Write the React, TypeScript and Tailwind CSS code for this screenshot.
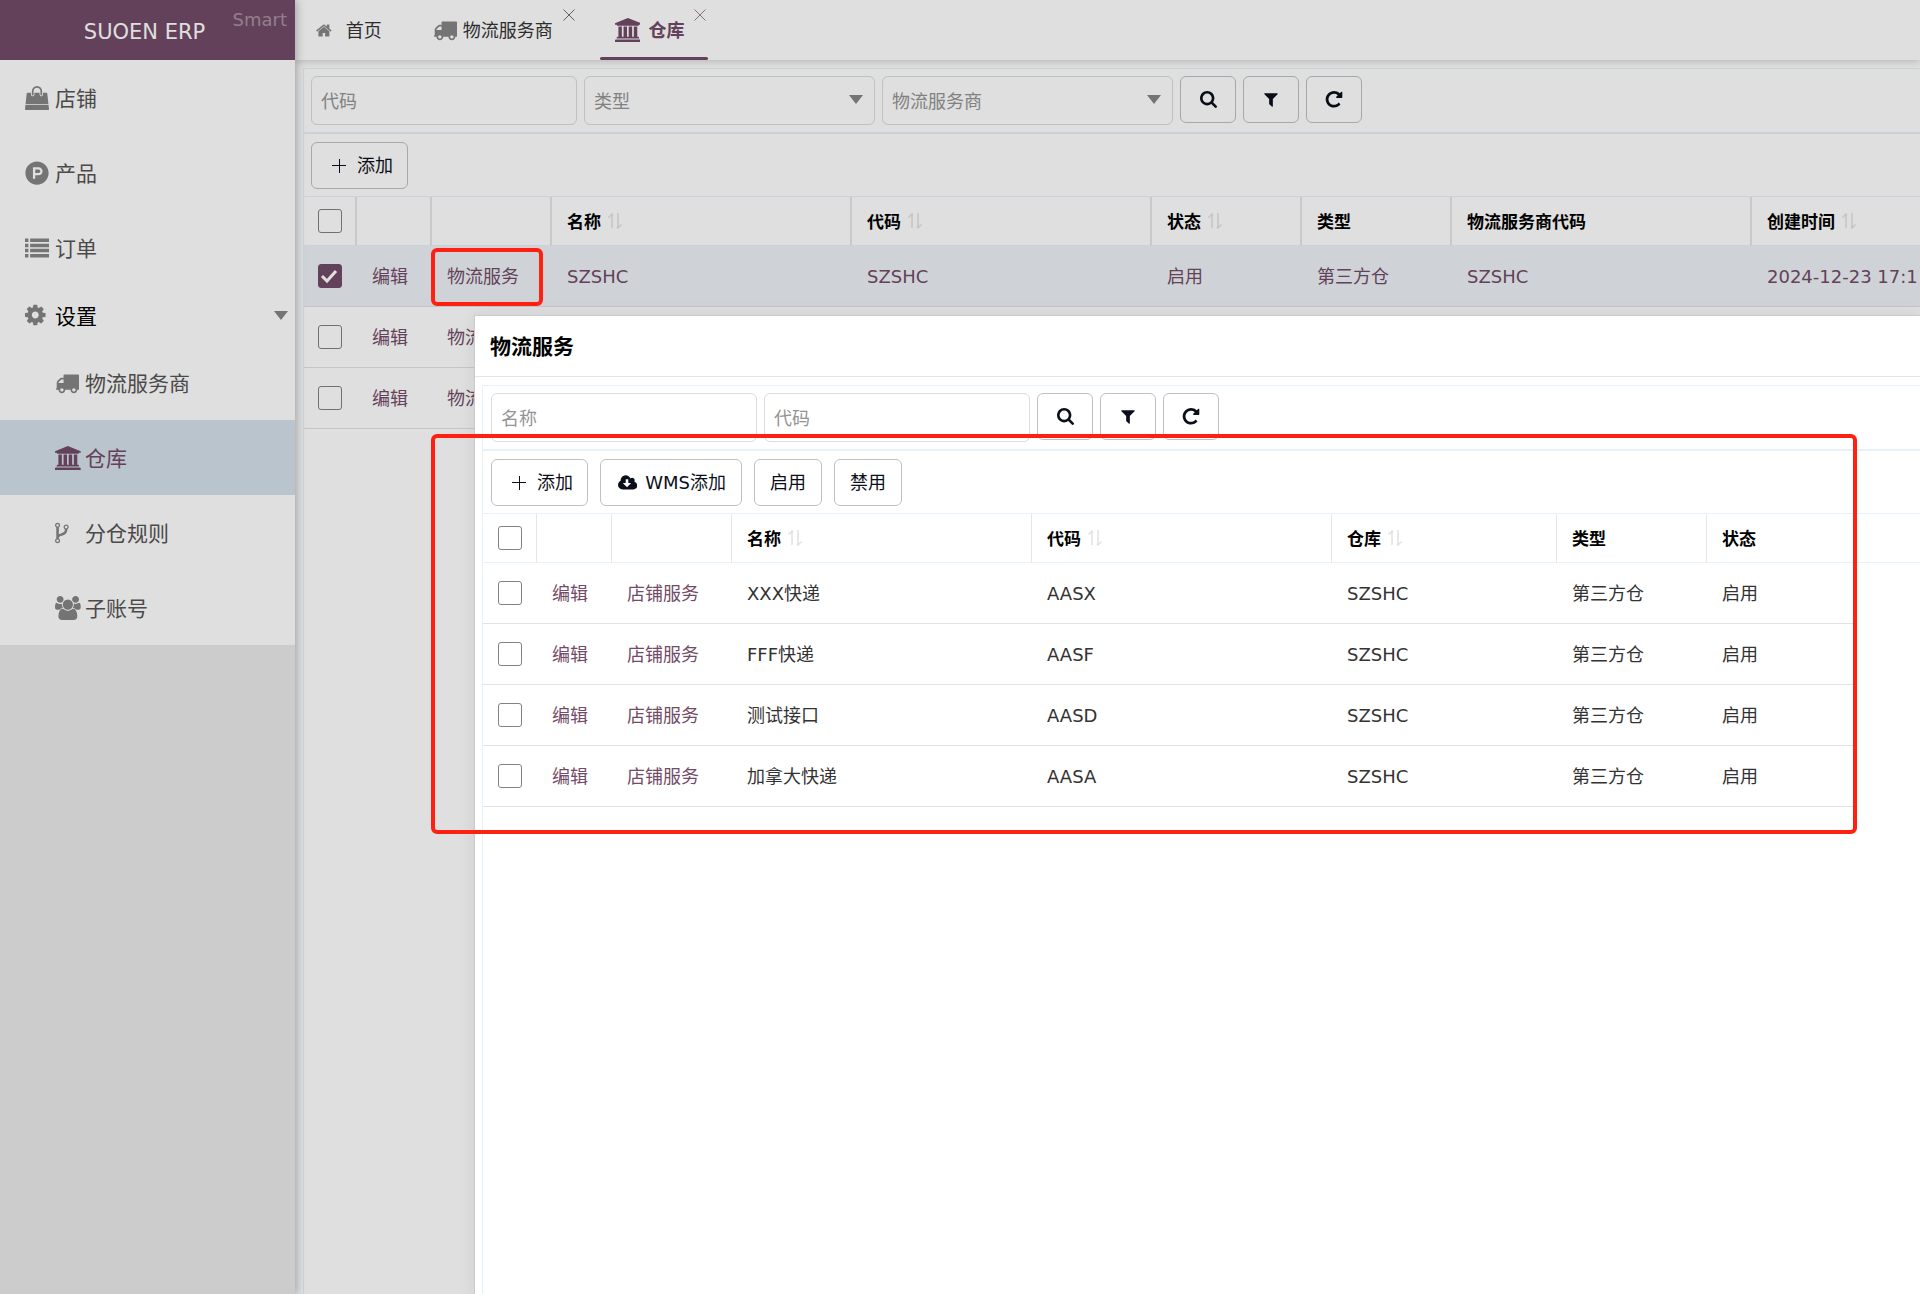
import React from "react";
import { FaProductHunt } from "react-icons/fa";

type IconProps = { name: keyof typeof icons; size?: string };

const icons = {
  bag: {
    box: "0 0 1792 1792",
    d: "M1757 1408l35 313q3 28-16 50-19 21-48 21h-1664q-29 0-48-21-19-22-16-50l35-313h1722zm-93-839l86 775h-1708l86-775q3-24 21-40.500t43-16.500h256v128q0 53 37.500 90.500t90.500 37.500 90.500-37.500 37.500-90.500v-128h384v128q0 53 37.500 90.500t90.500 37.500 90.500-37.500 37.500-90.500v-128h256q25 0 43 16.500t21 40.500zm-384-185v256q0 26-19 45t-45 19-45-19-19-45v-256q0-106-75-181t-181-75-181 75-75 181v256q0 26-19 45t-45 19-45-19-19-45v-256q0-159 112.500-271.500t271.500-112.500 271.500 112.500 112.500 271.500z",
  },
  list: {
    box: "0 0 1792 1792",
    d: "M0 192h256v256H0zM384 192h1408v256H384zM0 576h256v256H0zM384 576h1408v256H384zM0 960h256v256H0zM384 960h1408v256H384zM0 1344h256v256H0zM384 1344h1408v256H384z",
  },
  cog: {
    box: "128 0 1536 1792",
    d: "M1152 896q0-106-75-181t-181-75-181 75-75 181 75 181 181 75 181-75 75-181zm512-109v222q0 12-8 23t-20 13l-185 28q-19 54-39 91 35 50 107 138 10 12 10 25t-9 23q-27 37-99 108t-94 71q-12 0-26-9l-138-108q-44 23-91 38-16 136-29 186-7 28-36 28h-222q-14 0-24.500-8.500t-11.500-21.500l-28-184q-49-16-90-37l-141 107q-10 9-25 9-14 0-25-11-126-114-165-168-7-10-7-23 0-12 8-23 15-21 51-66.500t54-70.500q-27-50-41-99l-183-27q-13-2-21-12.500t-8-23.500v-222q0-12 8-23t19-13l186-28q14-46 39-92-40-57-107-138-10-12-10-24 0-10 9-23 26-36 98.500-107.500t94.500-71.500q13 0 26 10l138 107q44-23 91-38 16-136 29-186 7-28 36-28h222q14 0 24.500 8.500t11.500 21.500l28 184q49 16 90 37l142-107q9-9 24-9 13 0 25 10 129 119 165 170 7 8 7 22 0 12-8 23-15 21-51 66.500t-54 70.500q26 50 41 98l183 28q13 2 21 12.500t8 23.500z",
  },
  truck: {
    box: "0 0 1792 1792",
    d: "M640 1408q0-52-38-90t-90-38-90 38-38 90 38 90 90 38 90-38 38-90zm-384-512h384v-256h-158q-13 0-22 9l-195 195q-9 9-9 22v30zm1280 512q0-52-38-90t-90-38-90 38-38 90 38 90 90 38 90-38 38-90zm256-1088v1024q0 15-4 26.500t-13.500 18.500-16.500 11.500-23.500 6-22.500 2-25.500 0-22.500-.5q0 106-75 181t-181 75-181-75-75-181h-384q0 106-75 181t-181 75-181-75-75-181h-64q-3 0-22.500.5t-25.500 0-22.500-2-23.500-6-16.500-11.500-13.500-18.500-4-26.500q0-26 19-45t45-19v-320q0-8-.5-35t0-38 2.500-34.500 6.500-37 14-30.500 22.500-30l198-198q19-19 50.500-32t58.500-13h160v-192q0-26 19-45t45-19h1024q26 0 45 19t19 45z",
  },
  bank: {
    box: "0 0 1920 1792",
    d: "M960 0l960 384v128h-128q0 26-20.500 45t-48.500 19h-1526q-28 0-48.500-19t-20.500-45h-128v-128zm-704 640h256v768h128v-768h256v768h128v-768h256v768h128v-768h256v768h59q28 0 48.500 19t20.500 45v64h-1664v-64q0-26 20.500-45t48.500-19h59v-768zm1595 960q28 0 48.500 19t20.500 45v128h-1920v-128q0-26 20.500-45t48.500-19h1782z",
  },
  fork: {
    box: "384 0 1024 1792",
    d: "M672 1472q0-40-28-68t-68-28-68 28-28 68 28 68 68 28 68-28 28-68zm0-1152q0-40-28-68t-68-28-68 28-28 68 28 68 68 28 68-28 28-68zm640 128q0-40-28-68t-68-28-68 28-28 68 28 68 68 28 68-28 28-68zm96 0q0 52-26 96.500t-70 69.500q-2 287-226 414-67 38-203 81-128 40-169.500 71t-41.500 100v26q44 25 70 69.500t26 96.500q0 80-56 136t-136 56-136-56-56-136q0-52 26-96.500t70-69.500v-820q-44-25-70-69.500t-26-96.500q0-80 56-136t136-56 136 56 56 136q0 52-26 96.500t-70 69.500v497q54-26 154-57 55-17 87.500-29.500t70.500-31 59-39.500 40.500-51 28-69.500 8.500-91.500q-44-25-70-69.500t-26-96.500q0-80 56-136t136-56 136 56 56 136z",
  },
  users: {
    box: "-64 0 1920 1792",
    d: "M529 896q-162 5-265 128h-134q-82 0-138-40.500t-56-118.500q0-353 124-353 6 0 43.500 21t97.500 42.500 119 21.500q67 0 133-23-5 37-5 66 0 143 83 263zm1071 637q0 120-73 189.500t-194 69.500h-874q-121 0-194-69.500t-73-189.500q0-53 3.500-103.500t14-109 26.500-108.500 43-97.500 62-81 85.500-53.500 111.500-20q10 0 43 21.500t73 48 107 48 135 21.500 135-21.500 107-48 73-48 43-21.500q61 0 111.500 20t85.500 53.500 62 81 43 97.500 26.500 108.500 14 109 3.500 103.500zm-1024-1277q0 106-75 181t-181 75-181-75-75-181 75-181 181-75 181 75 75 181zm704 384q0 159-112.500 271.500t-271.500 112.500-271.500-112.500-112.500-271.500 112.500-271.500 271.500-112.500 271.500 112.500 112.500 271.500zm576 225q0 78-56 118.500t-138 40.500h-134q-103-123-265-128 83-120 83-263 0-29-5-66 66 23 133 23 59 0 119-21.500t97.500-42.500 43.500-21q124 0 124 353zm-128-609q0 106-75 181t-181 75-181-75-75-181 75-181 181-75 181 75 75 181z",
  },
  home: {
    box: "64 0 1664 1792",
    d: "M1472 992v480q0 26-19 45t-45 19h-384v-384h-256v384h-384q-26 0-45-19t-19-45v-480q0-1 .5-3t.5-3l575-474 575 474q1 2 1 6zm223-69l-62 74q-8 9-21 11h-3q-13 0-21-7l-692-577-692 577q-12 8-24 7-13-2-21-11l-62-74q-8-10-7-23.500t11-21.500l719-599q32-26 76-26t76 26l244 204v-195q0-14 9-23t23-9h192q14 0 23 9t9 23v408l219 182q10 8 11 21.500t-7 23.500z",
  },
  search: {
    box: "64 128 1664 1664",
    d: "M1216 832q0-185-131.500-316.500t-316.500-131.500-316.500 131.500-131.500 316.500 131.500 316.500 316.500 131.500 316.500-131.500 131.500-316.500zm512 832q0 52-38 90t-90 38q-54 0-90-38l-343-342q-179 124-399 124-143 0-273.500-55.500t-225-150-150-225-55.500-273.500 55.500-273.500 150-225 225-150 273.500-55.500 273.500 55.500 225 150 150 225 55.500 273.500q0 220-124 399l343 343q37 37 37 90z",
  },
  filter: {
    box: "64 128 1664 1664",
    d: "M1595 295q17 41-14 70l-493 493v742q0 42-39 59-13 5-25 5-27 0-45-19l-256-256q-19-19-19-45v-486l-493-493q-31-29-14-70 17-39 59-39h1280q42 0 59 39z",
  },
  repeat: {
    box: "64 128 1664 1664",
    d: "M1664 256v448q0 26-19 45t-45 19h-448q-42 0-59-40-17-39 14-69l138-138q-148-137-349-137-104 0-198.500 40.500t-163.500 109.500-109.500 163.500-40.500 198.500 40.500 198.500 109.500 163.500 163.500 109.500 198.500 40.500q119 0 225-52t179-147q7-10 23-12 15 0 25 9l137 138q9 8 9.500 20.500t-7.500 22.500q-109 132-264 204.500t-327 72.500q-156 0-298-61t-245-164-164-245-61-298 61-298 164-245 245-164 298-61q147 0 284.500 55.500t244.500 156.500l130-129q29-31 70-14 39 17 39 59z",
  },
  cloud: {
    box: "-64 0 1920 1792",
    d: "M1216 928q0-14-9-23t-23-9h-224v-352q0-13-9.500-22.500t-22.500-9.500h-192q-13 0-22.500 9.500t-9.500 22.500v352h-224q-13 0-22.500 9.500t-9.500 22.500q0 14 9 23l352 352q9 9 23 9t23-9l351-351q10-12 10-24zm640 224q0 159-112.500 271.500t-271.500 112.500h-1088q-185 0-316.500-131.500t-131.500-316.500q0-130 70-240t188-165q-2-30-2-43 0-212 150-362t362-150q156 0 285.500 87t188.500 231q71-62 166-62 106 0 181 75t75 181q0 76-41 138 130 31 213.500 135.500t83.500 238.500z",
  },
};

function Icon({ name, size = "h-6" }: IconProps) {
  return (
    <svg viewBox={icons[name].box} fill="currentColor" className={`${size} w-auto shrink-0`} aria-hidden="true">
      <path d={icons[name].d} />
    </svg>
  );
}

function Plus() {
  return (
    <svg viewBox="0 0 14 14" className="h-[14px] w-[14px]" stroke="currentColor" fill="none" aria-hidden="true">
      <path d="M7.500 0v14M0 6.500h14" />
    </svg>
  );
}

function Sort() {
  return (
    <svg viewBox="0 0 14 16" className="h-4 w-[14px] text-[#e2e2e2]" fill="none" stroke="currentColor" strokeWidth="1.500" aria-hidden="true">
      <path d="M4 15V1M0.500 4.500L4 1L5 2.500M10 0v14.500M13.500 11.500L10 15L9 13.500" />
    </svg>
  );
}

function Caret() {
  return (
    <svg viewBox="0 0 14 9" className="h-[9px] w-[14px] text-[#858585]" fill="currentColor" aria-hidden="true">
      <path d="M0 0h14L7 9z" />
    </svg>
  );
}

function Check({ label, checked = false }: { label: string; checked?: boolean }) {
  return (
    <span className="relative block h-6 w-6">
      <input
        type="checkbox"
        aria-label={label}
        defaultChecked={checked}
        className="peer block h-6 w-6 appearance-none rounded-[3px] border border-[#828282] bg-white checked:border-[#724b67] checked:bg-[#724b67]"
      />
      <svg viewBox="0 0 24 24" className="pointer-events-none absolute inset-0 hidden h-6 w-6 text-white peer-checked:block" fill="none" stroke="currentColor" strokeWidth="3" aria-hidden="true">
        <path d="M4 12l5 5L18 7" />
      </svg>
    </span>
  );
}

function TextField({ label }: { label: string }) {
  return (
    <input
      type="text"
      aria-label={label}
      placeholder={label}
      className="h-[49px] w-[266px] rounded-md border border-[#dcdcdc] bg-white px-[9px] pt-[2px] placeholder:text-[#949494]"
    />
  );
}

function SelectField({ label }: { label: string }) {
  return (
    <div className="relative">
      <select aria-label={label} className="h-[49px] w-[291px] appearance-none rounded-md border border-[#dcdcdc] bg-white px-[9px] pt-[2px] text-[#949494]">
        <option>{label}</option>
      </select>
      <span className="pointer-events-none absolute top-[19px] right-3">
        <Caret />
      </span>
    </div>
  );
}

const buttonClass =
  "flex h-[47px] items-center justify-center rounded-md border border-[#c0c0c4] bg-white text-[#0b0f1a]";

function SearchButtons() {
  return (
    <>
      <button type="button" aria-label="搜索" className={`${buttonClass} w-14`}><Icon name="search" size="h-[17px]" /></button>
      <button type="button" aria-label="筛选" className={`${buttonClass} w-14`}><Icon name="filter" size="h-4" /></button>
      <button type="button" aria-label="刷新" className={`${buttonClass} w-14`}><Icon name="repeat" size="h-[18px]" /></button>
    </>
  );
}

function AddButton() {
  return (
    <button type="button" className={`${buttonClass} gap-[11px] px-[18px] pr-[14px] pl-5`}>
      <Plus />
      添加
    </button>
  );
}

function HeadCell({ title, sort, last }: { title?: string; sort?: boolean; last?: boolean }) {
  return (
    <th className={`h-[49px] border-b border-[#e6f1fa] px-[15px] text-left text-[17px] font-bold text-black ${last ? "" : "border-r border-r-[#e6e6e6]"}`}>
      <span className="flex items-center gap-[7px]">
        <span className="pt-[2px]">{title}</span>
        {sort && <Sort />}
      </span>
    </th>
  );
}

const cellClass = "h-[61px] border-b border-[#e3e3e3] px-[15px] whitespace-nowrap";
const textCellClass = `${cellClass} pt-[2px]`;

const topMenu = [
  { name: "店铺", icon: <Icon name="bag" /> },
  { name: "产品", icon: <FaProductHunt size={24} /> },
  { name: "订单", icon: <Icon name="list" /> },
];

const subMenu: { name: string; icon: keyof typeof icons; active?: boolean }[] = [
  { name: "物流服务商", icon: "truck" },
  { name: "仓库", icon: "bank", active: true },
  { name: "分仓规则", icon: "fork" },
  { name: "子账号", icon: "users" },
];

const warehouses = [
  ["SZSHC", "SZSHC", "启用", "第三方仓", "SZSHC", "2024-12-23 17:1"],
  ["", "", "", "", "", ""],
  ["", "", "", "", "", ""],
];

const services = [
  ["XXX快递", "AASX"],
  ["FFF快递", "AASF"],
  ["测试接口", "AASD"],
  ["加拿大快递", "AASA"],
];

function Sidebar() {
  return (
    <aside className="z-10 w-[295px] shrink-0 bg-[#eaeaea] text-[21px] shadow-[2px_0_8px_rgba(0,0,0,0.25)]">
      <div className="relative flex h-[60px] items-center justify-center bg-[#724b67] text-white">
        <span className="pt-1 pr-[6px]">SUOEN ERP</span>
        <span className="absolute top-2 right-2 text-lg leading-6 text-white/40">Smart</span>
      </div>
      <nav className="bg-white text-[#555]">
        {topMenu.map((item) => (
          <a key={item.name} href="#" className="flex h-[75px] items-center pl-[25px]">
            <span className="w-[30px] text-[#858585]">{item.icon}</span>
            <span className="pt-[2px]">{item.name}</span>
          </a>
        ))}
        <a href="#" className="flex h-[60px] items-center pr-[7px] pl-[25px] text-black">
          <span className="w-[30px] text-[#858585]"><Icon name="cog" /></span>
          <span className="flex-1 pt-1">设置</span>
          <Caret />
        </a>
        {subMenu.map((item) => (
          <a
            key={item.name}
            href="#"
            className={`flex h-[75px] items-center pl-[55px] ${item.active ? "bg-[#d5e0ea] text-[#724b67]" : ""}`}
          >
            <span className={`w-[30px] ${item.active ? "" : "text-[#858585]"}`}><Icon name={item.icon} /></span>
            <span className="pt-[2px]">{item.name}</span>
          </a>
        ))}
      </nav>
    </aside>
  );
}

function CloseTab({ label }: { label: string }) {
  return (
    <button type="button" aria-label={label} className="absolute top-[9px] right-[2px]">
      <svg viewBox="0 0 12 12" className="h-3 w-3 opacity-70" fill="none" stroke="currentColor" aria-hidden="true">
        <path d="M0.500 0.500l11 11M11.500 0.500l-11 11" />
      </svg>
    </button>
  );
}

function Tabs() {
  return (
    <div className="relative flex h-[60px] gap-[23px] bg-white pl-[6px] shadow-[0_1px_8px_rgba(0,0,0,0.2)]">
      <a href="#" className="flex items-center gap-[14px] pr-[13px] pl-[15px] text-[#333]">
        <span className="text-[#858585]"><Icon name="home" size="h-[17px]" /></span>
        <span className="pt-[2px]">首页</span>
      </a>
      <div className="relative flex items-center pr-6 pl-[15px] text-[#333]">
        <a href="#" className="flex items-center gap-[6px]">
          <span className="text-[#858585]"><Icon name="truck" /></span>
          <span className="pt-[2px]">物流服务商</span>
        </a>
        <CloseTab label="关闭物流服务商" />
      </div>
      <div className="relative flex items-center pr-6 pl-[15px] font-bold text-[#724b67]">
        <a href="#" className="flex items-center gap-2">
          <Icon name="bank" />
          <span className="pt-[2px]">仓库</span>
        </a>
        <CloseTab label="关闭仓库" />
        <span className="absolute inset-x-0 bottom-0 h-[3px] rounded-sm bg-[#724b67]" />
      </div>
    </div>
  );
}

function WarehousePanel() {
  return (
    <section className="mt-2 ml-2 flex-1 overflow-hidden border-t border-l border-[#e6f1fa] bg-white">
      <div className="flex gap-[7px] border-b-2 border-[#e6f1fa] p-[7px]">
        <TextField label="代码" />
        <SelectField label="类型" />
        <SelectField label="物流服务商" />
        <SearchButtons />
      </div>
      <div className="flex border-b border-[#e6f1fa] px-[7px] py-2 pb-[7px]">
        <AddButton />
      </div>
      <table className="w-max table-fixed border-separate border-spacing-0 [&_th]:border-r-2">
        <colgroup>
          <col className="w-[53px]" />
          <col className="w-[75px]" />
          <col className="w-[120px]" />
          <col className="w-[300px]" />
          <col className="w-[300px]" />
          <col className="w-[150px]" />
          <col className="w-[150px]" />
          <col className="w-[300px]" />
          <col className="w-[300px]" />
        </colgroup>
        <thead>
          <tr>
            <th className="border-b border-[#e6f1fa] border-r-[#e6e6e6] pl-[14px]"><Check label="全选仓库" /></th>
            <HeadCell />
            <HeadCell />
            <HeadCell title="名称" sort />
            <HeadCell title="代码" sort />
            <HeadCell title="状态" sort />
            <HeadCell title="类型" />
            <HeadCell title="物流服务商代码" />
            <HeadCell title="创建时间" sort />
          </tr>
        </thead>
        <tbody>
          {warehouses.map((row, i) => (
            <tr key={i} className={i === 0 ? "bg-[#edf2f7] text-[#724b67]" : "text-[#333]"}>
              <td className="h-[61px] border-b border-[#e3e3e3] pl-[14px]"><Check label="选择仓库" checked={i === 0} /></td>
              <td className={textCellClass}><a href="#" className="text-[#724b67]">编辑</a></td>
              <td className={textCellClass}><a href="#" className="text-[#724b67]">物流服务</a></td>
              {row.map((value, j) => (
                <td key={j} className={textCellClass}>{value}</td>
              ))}
            </tr>
          ))}
        </tbody>
      </table>
    </section>
  );
}

function ServiceDialog() {
  return (
    <section role="dialog" aria-label="物流服务" className="absolute top-[315px] right-0 bottom-0 left-[474px] flex flex-col border-t border-l border-[#cbcbcb] bg-white shadow-[0_0_16px_rgba(0,0,0,0.08)]">
      <h2 className="flex h-[61px] items-center border-b border-[#e4e4e4] px-[15px] pt-[2px] text-[21px] font-bold text-black">物流服务</h2>
      <div className="mt-2 ml-[7px] flex-1 border-t border-l border-[#e6f1fa]">
        <div className="flex gap-[7px] border-b-2 border-[#e6f1fa] px-2 py-[7px]">
          <TextField label="名称" />
          <TextField label="代码" />
          <SearchButtons />
        </div>
        <div className="flex gap-3 border-b border-[#e6f1fa] px-2 py-2 pb-[7px]">
          <AddButton />
          <button type="button" className={`${buttonClass} gap-2 pr-[15px] pl-[17px]`}>
            <Icon name="cloud" size="h-[18px]" />
            WMS添加
          </button>
          <button type="button" className={`${buttonClass} px-[15px]`}>启用</button>
          <button type="button" className={`${buttonClass} px-[15px]`}>禁用</button>
        </div>
        <table className="w-full table-fixed border-separate border-spacing-0">
          <colgroup>
            <col className="w-[54px]" />
            <col className="w-[75px]" />
            <col className="w-[120px]" />
            <col className="w-[300px]" />
            <col className="w-[300px]" />
            <col className="w-[225px]" />
            <col className="w-[150px]" />
            <col className="w-[150px]" />
            <col />
          </colgroup>
          <thead>
            <tr>
              <th className="border-r border-b border-[#e6f1fa] border-r-[#e6e6e6] px-[15px]"><Check label="全选服务" /></th>
              <HeadCell />
              <HeadCell />
              <HeadCell title="名称" sort />
              <HeadCell title="代码" sort />
              <HeadCell title="仓库" sort />
              <HeadCell title="类型" />
              <HeadCell title="状态" last />
              <HeadCell last />
            </tr>
          </thead>
          <tbody>
            {services.map(([name, code]) => (
              <tr key={code} className="text-[#333]">
                <td className={cellClass}><Check label={name} /></td>
                <td className={textCellClass}><a href="#" className="text-[#724b67]">编辑</a></td>
                <td className={textCellClass}><a href="#" className="text-[#724b67]">店铺服务</a></td>
                <td className={textCellClass}>{name}</td>
                <td className={textCellClass}>{code}</td>
                <td className={textCellClass}>SZSHC</td>
                <td className={textCellClass}>第三方仓</td>
                <td className={textCellClass}>启用</td>
                <td></td>
              </tr>
            ))}
          </tbody>
        </table>
      </div>
    </section>
  );
}

export default function App() {
  return (
    <div className="relative flex min-h-screen overflow-hidden bg-white font-['DejaVu_Sans','Noto_Sans_CJK_SC',sans-serif] text-lg leading-6">
      <Sidebar />
      <main className="flex min-w-0 flex-1 flex-col">
        <Tabs />
        <WarehousePanel />
      </main>

      {/* Shade behind the dialog */}
      <div className="absolute inset-0 z-20 bg-black/[0.125]" />

      <div className="pointer-events-none absolute inset-0 z-30">
        <div className="pointer-events-auto"><ServiceDialog /></div>
        {/* Highlight frames */}
        <div className="absolute top-[248px] left-[431px] h-[58px] w-[112px] rounded-md border-4 border-[#ff2012]" />
        <div className="absolute top-[434px] left-[431px] h-[400px] w-[1426px] rounded-md border-4 border-[#ff2012]" />
      </div>
    </div>
  );
}
